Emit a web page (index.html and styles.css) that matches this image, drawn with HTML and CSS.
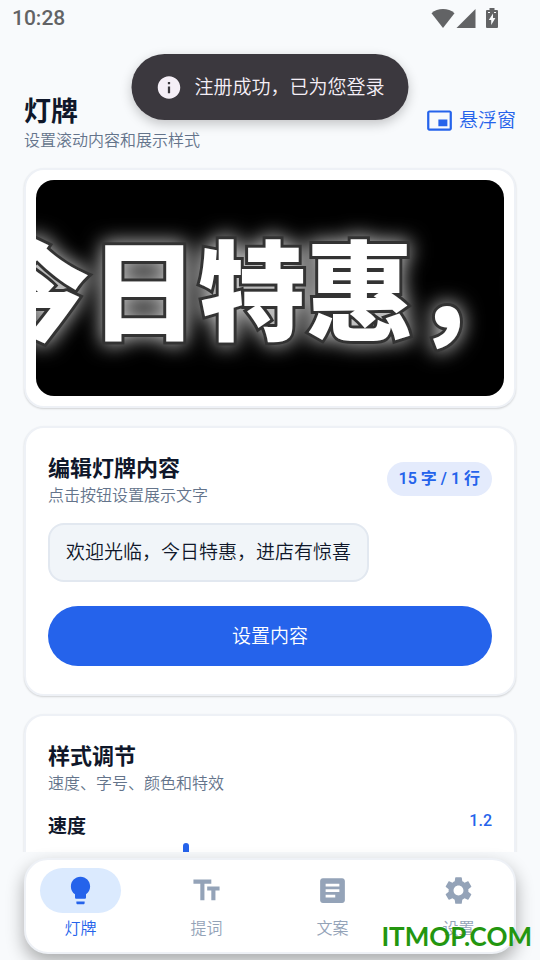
FILE: index.html
```html
<!DOCTYPE html>
<html lang="zh-CN">
	<head>
		<meta charset="UTF-8">
		<meta name="viewport" content="width=device-width, initial-scale=1">
		<title>灯牌</title>
		<link rel="stylesheet" href="styles.css">
	</head>
	<body>
		<div class="statusBar">
			<span class="time">10:28</span>
			<div class="statusIcons">
				<svg class="wifi" width="24" height="20" viewBox="0 0 24 20"><path d="M12 20L0.5 5.2C3.6 2.4 7.6 1 12 1s8.400 1.400 11.500 4.200z"/></svg>
				<svg class="signal" width="20" height="20" viewBox="0 0 20 20"><path d="M0.500 20L19.500 1v19z"/></svg>
				<svg class="battery" width="12" height="20" viewBox="0 0 12 20"><path fill-rule="evenodd" d="M3.500 0h5v2H11q1 0 1 1v16q0 1-1 1H1q-1 0-1-1V3q0-1 1-1h2.500zM2 4v1h2V4zM8 4v1h2V4zM7 5.500L2.800 12h2.400v5L9.400 10H7z"/></svg>
			</div>
		</div>

		<main class="page">
			<header class="pageHead">
				<div>
					<h1>灯牌</h1>
					<p class="sub">设置滚动内容和展示样式</p>
				</div>
				<button type="button" class="floatBtn">
					<svg width="27" height="27" viewBox="0 0 24 24"><path d="M19 11h-8v6h8v-6zm4 8V4.980C23 3.880 22.100 3 21 3H3c-1.100 0-2 .88-2 1.980V19c0 1.100.9 2 2 2h18c1.100 0 2-.9 2-2zm-2 .02H3V4.970h18v14.050z"/></svg>
					悬浮窗
				</button>
			</header>

			<section class="card preview">
				<div class="board"><span class="boardText">欢迎光临，今日特惠，进店有惊喜</span></div>
			</section>

			<section class="card">
				<div class="cardHead">
					<div>
						<h2>编辑灯牌内容</h2>
						<p class="sub">点击按钮设置展示文字</p>
					</div>
					<span class="count">15 字 / 1 行</span>
				</div>
				<div class="content">欢迎光临，今日特惠，进店有惊喜</div>
				<button type="button" class="setBtn">设置内容</button>
			</section>

			<section class="card">
				<h2>样式调节</h2>
				<p class="sub">速度、字号、颜色和特效</p>
				<div class="sliderHead">
					<label for="speed">速度</label>
					<output for="speed">1.2</output>
				</div>
				<input type="range" id="speed" class="slider" min="0.4" max="3" step="0.1" value="1.2">
			</section>
		</main>

		<nav class="tabBar">
			<a href="#" class="tab active">
				<span class="tabIcon"><svg width="33" height="33" viewBox="0 0 24 24"><path d="M9 21c0 .5.4 1 1 1h4c.6 0 1-.5 1-1v-1H9v1zm3-19C8.100 2 5 5.100 5 9c0 2.400 1.200 4.500 3 5.700V17c0 .5.4 1 1 1h6c.6 0 1-.5 1-1v-2.300c1.800-1.300 3-3.400 3-5.700 0-3.900-3.100-7-7-7z"/></svg></span>
				灯牌
			</a>
			<a href="#" class="tab">
				<span class="tabIcon"><svg width="33" height="33" viewBox="0 0 24 24"><path d="M2.500 4v3h5v12h3V7h5V4h-13zm19 5h-9v3h3v7h3v-7h3V9z"/></svg></span>
				提词
			</a>
			<a href="#" class="tab">
				<span class="tabIcon"><svg width="33" height="33" viewBox="0 0 24 24"><path d="M19 3H5c-1.100 0-2 .9-2 2v14c0 1.100.9 2 2 2h14c1.100 0 2-.9 2-2V5c0-1.100-.9-2-2-2zm-5 14H7v-2h7v2zm3-4H7v-2h10v2zm0-4H7V7h10v2z"/></svg></span>
				文案
			</a>
			<a href="#" class="tab">
				<span class="tabIcon"><svg width="33" height="33" viewBox="0 0 24 24"><path d="M19.140 12.940c.04-.3.06-.61.06-.94 0-.32-.02-.64-.07-.94l2.030-1.580c.18-.14.23-.41.12-.61l-1.920-3.320c-.12-.22-.37-.29-.59-.22l-2.390.96c-.5-.38-1.030-.7-1.620-.94l-.36-2.540c-.04-.24-.24-.41-.48-.41h-3.840c-.24 0-.43.17-.47.41l-.36 2.540c-.59.24-1.130.57-1.620.94l-2.390-.96c-.22-.08-.47 0-.59.22L2.740 8.870c-.12.21-.08.47.12.61l2.030 1.580c-.05.3-.09.63-.09.94s.02.64.07.94l-2.030 1.580c-.18.14-.23.41-.12.61l1.920 3.320c.12.22.37.29.59.22l2.390-.96c.5.38 1.030.7 1.620.94l.36 2.540c.05.24.24.41.48.41h3.840c.24 0 .44-.17.47-.41l.36-2.540c.59-.24 1.130-.56 1.620-.94l2.390.96c.22.08.47 0 .59-.22l1.920-3.320c.12-.22.07-.47-.12-.61l-2.010-1.580zM12 15.600c-1.980 0-3.600-1.620-3.600-3.600s1.620-3.600 3.600-3.600 3.600 1.620 3.600 3.600-1.620 3.600-3.600 3.600z"/></svg></span>
				设置
			</a>
		</nav>

		<div class="toast" role="status">
			<svg width="27" height="27" viewBox="0 0 24 24"><path d="M12 2C6.480 2 2 6.480 2 12s4.480 10 10 10 10-4.480 10-10S17.520 2 12 2zm1 15h-2v-6h2v6zm0-8h-2V7h2v2z"/></svg>
			注册成功，已为您登录
		</div>
		<div class="watermark">ITMOP.COM</div>
	</body>
</html>
```
FILE: styles.css
```css
* {
	box-sizing: border-box;
}
body {
	margin: 0;
	height: 100vh;
	display: flex;
	flex-direction: column;
	position: relative;
	overflow: hidden;
	background-color: #f8fafc;
	color: #0f172a;
	font: 350 19px/29px Roboto, "Noto Sans CJK SC", sans-serif;
}
h1, h2, p {
	margin: 0;
}
h1 {
	font-size: 27px;
	line-height: 36px;
	font-weight: 700;
}
h2 {
	font-size: 22px;
	line-height: 33px;
	font-weight: 700;
}
button {
	border: none;
	padding: 0;
	font: inherit;
	cursor: pointer;
}
svg {
	display: block;
	fill: currentColor;
}
.sub {
	font-size: 16px;
	line-height: 21px;
	color: #64748b;
}

/* 状态栏 */
.statusBar {
	display: flex;
	justify-content: space-between;
	align-items: center;
	height: 36px;
	padding: 0 42px 0 12px;
	color: #626365;
}
.time {
	font-size: 21px;
	line-height: 30px;
	font-weight: 500;
}
.statusIcons {
	display: flex;
	gap: 1px;
}
.battery {
	margin-left: 9px;
}

/* 内容区 */
.page {
	flex: 1;
	min-height: 0;
	overflow: hidden;
	padding: 58px 24px 0;
}
.pageHead {
	display: flex;
	justify-content: space-between;
	align-items: center;
	margin-bottom: 17px;
}
.floatBtn {
	display: flex;
	align-items: center;
	gap: 6px;
	padding-bottom: 5px;
	background: none;
	color: #2563eb;
}
.card {
	margin-bottom: 18px;
	padding: 24px 22px 28px;
	background-color: #fff;
	border: 2px solid #eef1f6;
	border-radius: 20px;
	box-shadow: 0 1px 2px rgba(0, 0, 0, 0.16);
}
.preview {
	padding: 10px;
}
.board {
	display: flex;
	align-items: center;
	height: 216px;
	padding-bottom: 6px;
	overflow: hidden;
	border-radius: 18px;
	background-color: #000;
}
.boardText {
	flex: none;
	margin-left: -594px;
	white-space: nowrap;
	color: #fff;
	font: 900 108px/150px "Noto Sans CJK SC", sans-serif;
	-webkit-text-stroke: 6px #333;
	paint-order: stroke fill;
	filter: drop-shadow(0 0 10px rgba(255, 255, 255, 0.8));
}
.cardHead {
	display: flex;
	justify-content: space-between;
	align-items: center;
}
.count {
	padding: 5px 12px;
	border-radius: 17px;
	background-color: #e4ebfc;
	color: #2563eb;
	font-size: 16px;
	line-height: 24px;
	font-weight: 600;
}
.content {
	width: fit-content;
	margin: 17px 0 24px;
	padding: 13px 16px;
	border: 2px solid #e2e8f0;
	border-radius: 16px;
	background-color: #f1f5f9;
}
.setBtn {
	display: block;
	width: 100%;
	height: 60px;
	border-radius: 30px;
	background-color: #2563eb;
	color: #fff;
}
.sliderHead {
	display: flex;
	justify-content: space-between;
	align-items: flex-start;
	margin: 18px 0 2px;
}
.sliderHead label {
	font-weight: 700;
}
.sliderHead output {
	color: #2563eb;
	font-size: 16px;
	line-height: 17px;
	font-weight: 500;
}
.slider {
	-webkit-appearance: none;
	appearance: none;
	display: block;
	width: 100%;
	height: 66px;
	margin: 0;
	background: none;
}
.slider::-webkit-slider-runnable-track {
	height: 66px;
	background: linear-gradient(#dbeafe, #dbeafe) center / 100% 24px no-repeat;
}
.slider::-webkit-slider-thumb {
	-webkit-appearance: none;
	width: 6px;
	height: 66px;
	border-radius: 3px;
	background-color: #2563eb;
}

/* 底部导航 */
.tabBar {
	display: flex;
	justify-content: space-between;
	margin: 6px 24px;
	padding: 8px 15px 11px 14px;
	border: 2px solid #eef1f6;
	border-radius: 24px;
	background-color: #fff;
	box-shadow: 0 8px 18px rgba(0, 0, 0, 0.32);
}
.tab {
	display: flex;
	flex-direction: column;
	align-items: center;
	gap: 4px;
	color: #94a3b8;
	font-size: 16px;
	line-height: 24px;
	text-decoration: none;
}
.tabIcon {
	padding: 6px 24px;
	border-radius: 23px;
}
.active {
	color: #2563eb;
}
.active .tabIcon {
	background-color: #dbeafe;
}

/* 浮层 */
.toast {
	position: absolute;
	top: 54px;
	left: 50%;
	transform: translateX(-50%);
	display: flex;
	align-items: center;
	gap: 12px;
	height: 66px;
	padding: 0 24px;
	border-radius: 33px;
	background-color: #3b383e;
	color: #f5eff7;
	white-space: nowrap;
	box-shadow: 0 4px 12px rgba(0, 0, 0, 0.22);
}
.watermark {
	position: absolute;
	right: 8px;
	bottom: 6px;
	color: #23960f;
	font: 700 26px/36px Lato, sans-serif;
}
```
